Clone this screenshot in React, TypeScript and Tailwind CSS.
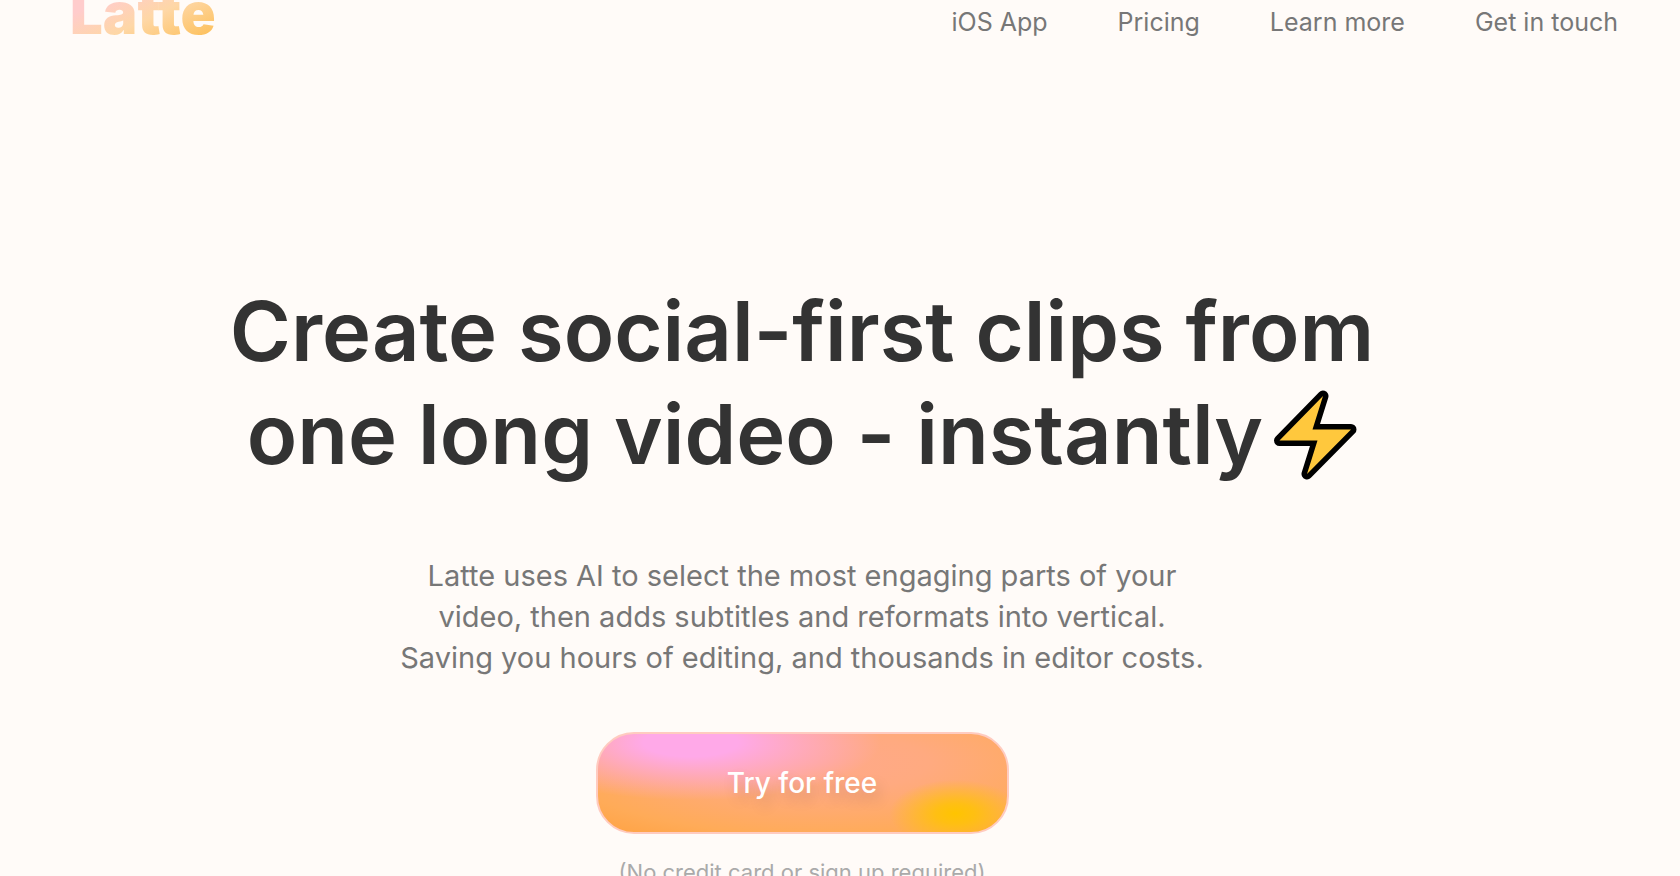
import React from "react";

const links = ["iOS App", "Pricing", "Learn more", "Get in touch"];

function Bolt() {
  return (
    <svg viewBox="0 0 84 90" className="h-[90px] w-[84px] shrink-0" aria-hidden="true">
      <path
        d="M50 6 L6.5 50.5 H44.5 L34 84 L78 39.5 H39.5 Z"
        fill="#ffc83d"
        stroke="#000"
        strokeWidth="11"
        strokeLinejoin="round"
        paintOrder="stroke"
      />
    </svg>
  );
}

export default function App() {
  return (
    <div className="h-screen overflow-hidden bg-[#fffbf8] font-['Inter',sans-serif]">
      <header className="-mt-8 flex h-[100px] items-start justify-between pr-[62px] pl-[70px]">
        <a
          href="#home"
          className="bg-linear-[155deg] from-[#ffcccc] from-30% via-[#fed7a6] via-55% to-[#fdbc4c] to-90% bg-clip-text text-[58px] leading-[90px] font-black text-transparent"
        >
          Latte
        </a>
        <nav className="flex gap-[70px] pt-9 text-[25px] leading-9 text-[#777]">
          {links.map((label) => (
            <a key={label} href="#top">
              {label}
            </a>
          ))}
        </nav>
      </header>
      <main className="flex flex-col items-center pt-[212px] pr-[76px] text-center">
        <h1 className="text-[83px] leading-[103px] font-semibold text-[#333]">
          <span className="block whitespace-nowrap">Create social-first clips from</span>
          <span className="flex items-center justify-center gap-2.5 whitespace-nowrap">
            one long video - instantly
            <Bolt />
          </span>
        </h1>
        <p className="mt-[69px] text-[29px] leading-[41px] text-[#777]">
          Latte uses AI to select the most engaging parts of your
          <br />
          video, then adds subtitles and reformats into vertical.
          <br />
          Saving you hours of editing, and thousands in editor costs.
        </p>
        <button
          type="button"
          className="mt-[54px] h-[102px] w-[413px] rounded-[38px] border-2 border-[#ffcbc0] bg-[radial-gradient(ellipse_66px_34px_at_87%_80%,#ffc400_0%,#ffc400cc_30%,#ffc40000_100%),radial-gradient(ellipse_190px_58px_at_23%_10%,#ffa9e8_0%,#ffa9e8_25%,#ffa9e800_100%),radial-gradient(ellipse_85%_95%_at_55%_30%,#ffa98a_0%,#ffaa80_30%,#ffab58_75%,#ff9f3a_105%)] bg-origin-border text-[28px] font-medium text-white text-shadow-[4px_8px_14px_#00000026]"
        >
          Try for free
        </button>
        <p className="mt-5 text-[22px] leading-9 whitespace-nowrap text-[#aaa]">(No credit card or sign up required)</p>
      </main>
    </div>
  );
}
